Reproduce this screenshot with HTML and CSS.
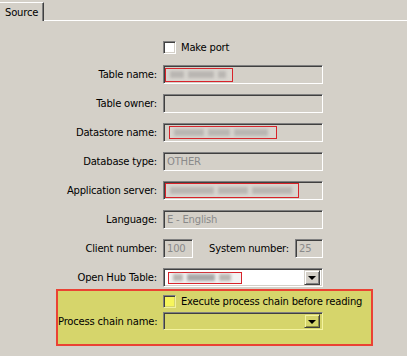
FILE: index.html
```html
<!DOCTYPE html>
<html lang="en">
<head>
  <meta charset="UTF-8">
  <title>Source</title>
  <link rel="stylesheet" href="styles.css">
</head>
<body>

  <div class="tabs">
    <div class="tab">Source</div>
    <div class="tab-line"></div>
  </div>

  <div class="form">
    <span></span>
    <label class="check"><span class="box"></span>Make port</label>

    <span class="lbl">Table name:</span>
    <div class="field"><span class="mask m1"><i></i><i></i><i></i></span></div>

    <span class="lbl">Table owner:</span>
    <div class="field"></div>

    <span class="lbl">Datastore name:</span>
    <div class="field"><span class="mask m2"><i></i><i></i><i></i></span></div>

    <span class="lbl">Database type:</span>
    <div class="field">OTHER</div>

    <span class="lbl">Application server:</span>
    <div class="field"><span class="mask m3"><i></i><i></i><i></i></span></div>

    <span class="lbl">Language:</span>
    <div class="field">E - English</div>

    <span class="lbl">Client number:</span>
    <div class="pair">
      <div class="field small">100</div>
      <span class="lbl">System number:</span>
      <div class="field small">25</div>
    </div>

    <span class="lbl">Open Hub Table:</span>
    <div class="field combo white"><span class="mask m4"><i></i><i></i><i></i></span><span class="drop"></span></div>
  </div>

  <div class="highlight">
    <span></span>
    <label class="check"><span class="box yellow"></span>Execute process chain before reading</label>

    <span class="lbl">Process chain name:</span>
    <div class="field combo ylw"><span class="drop"></span></div>
  </div>

</body>
</html>
```

FILE: styles.css
```css
:root {
  --face: #d4d0c8;
  --shadow: #808080;
  --dark: #404040;
  --hl: #d6d56b;
}

body {
  margin: 0;
  background: var(--face);
  font-family: 'DejaVu Sans', Verdana, sans-serif;
  font-size: 10px;
  letter-spacing: -0.2px;
  color: #000;
}

.tabs {
  display: flex;
  height: 21px;
  padding-top: 2px;
  box-sizing: border-box;
}

.tab {
  width: 44px;
  border-top: 1px solid #fff;
  border-right: 1px solid var(--dark);
  box-shadow: inset -1px 0 0 var(--shadow);
  padding: 4px 0 0 5px;
  box-sizing: border-box;
}

.tab-line {
  flex: 1;
  border-bottom: 1px solid #fff;
}

.form {
  display: grid;
  grid-template-columns: 157px 160px;
  column-gap: 6px;
  row-gap: 10px;
  padding-top: 20px;
  align-items: center;
}

.form > span:first-child {
  height: 13px;
}

.form .check {
  margin-bottom: 1px;
}

.lbl {
  text-align: right;
  white-space: nowrap;
}

.check {
  display: flex;
  align-items: center;
  gap: 5px;
  height: 13px;
  white-space: nowrap;
}

.box {
  flex: none;
  width: 11px;
  height: 11px;
  background: #fff;
  border-top: 1px solid var(--shadow);
  border-left: 1px solid var(--shadow);
  border-bottom: 1px solid #fff;
  border-right: 1px solid #fff;
  box-shadow: inset 1px 1px 0 var(--dark), inset -1px -1px 0 var(--face);
}

.box.yellow {
  background: #f6f55c;
  border-bottom-color: #f0f0a0;
  border-right-color: #f0f0a0;
  box-shadow: inset 1px 1px 0 var(--dark), inset -1px -1px 0 var(--hl);
}

.field {
  height: 19px;
  box-sizing: border-box;
  border-top: 1px solid var(--shadow);
  border-left: 1px solid var(--shadow);
  border-bottom: 1px solid #fff;
  border-right: 1px solid #fff;
  box-shadow: inset 1px 1px 0 var(--dark), inset -1px -1px 0 var(--face);
  padding: 0 3px;
  display: flex;
  align-items: center;
  color: #8a8a8a;
}

.field.white {
  background: #fff;
}

.field.combo {
  padding-right: 2px;
}

.pair {
  display: flex;
  align-items: center;
  gap: 6px;
}

.pair .lbl {
  margin-left: auto;
}

.field.small {
  width: 30px;
}

.pair .field.small:last-child {
  width: 28px;
}

.mask {
  height: 14px;
  box-sizing: border-box;
  border: 1px solid #d8232a;
  margin-left: -2px;
  display: flex;
  align-items: center;
  gap: 4px;
  padding: 0 4px;
  background: #d9d6d0;
}

.mask i {
  height: 7px;
  background: #b9b6b2;
  filter: blur(1.5px);
}

.m1 { width: 68px; }
.m1 i:nth-child(1) { width: 14px; }
.m1 i:nth-child(2) { width: 26px; }
.m1 i:nth-child(3) { width: 8px; }

.m2 { width: 108px; margin-left: 2px; height: 13px; }
.m2 i:nth-child(1) { width: 30px; }
.m2 i:nth-child(2) { width: 22px; }
.m2 i:nth-child(3) { width: 34px; }

.m3 { width: 134px; margin-left: -2px; height: 15px; }
.m3 i:nth-child(1) { width: 44px; }
.m3 i:nth-child(2) { width: 30px; }
.m3 i:nth-child(3) { width: 40px; }

.m4 { width: 74px; margin-left: 1px; height: 12px; background: #f2f2f2; }
.m4 i:nth-child(1) { width: 10px; }
.m4 i:nth-child(2) { width: 28px; background: #a8a8a8; }
.m4 i:nth-child(3) { width: 12px; }

.drop {
  margin-left: auto;
  width: 16px;
  height: 15px;
  box-sizing: border-box;
  background: var(--face);
  border-top: 1px solid var(--face);
  border-left: 1px solid var(--face);
  border-right: 1px solid var(--dark);
  border-bottom: 1px solid var(--dark);
  box-shadow: inset 1px 1px 0 #fff, inset -1px -1px 0 var(--shadow);
  display: flex;
  align-items: center;
  justify-content: center;
}

.drop::after {
  content: '';
  border-left: 4px solid transparent;
  border-right: 4px solid transparent;
  border-top: 4px solid #000;
  margin-top: 1px;
}

.highlight {
  margin: 2px 0 0 56px;
  width: 317px;
  height: 57px;
  box-sizing: border-box;
  border: 2px solid #ea4234;
  background: var(--hl);
  display: grid;
  grid-template-columns: 99px 160px;
  column-gap: 6px;
  row-gap: 4px;
  padding-top: 4px;
  align-content: start;
  align-items: center;
}

.highlight .field.ylw {
  background: var(--hl);
  border-bottom-color: #f4f3a0;
  border-right-color: #f4f3a0;
  box-shadow: inset 1px 1px 0 var(--dark), inset -1px -1px 0 var(--hl);
  height: 18px;
}

.highlight .drop {
  background: var(--hl);
  border-top-color: var(--hl);
  border-left-color: var(--hl);
  box-shadow: inset 1px 1px 0 #f4f3a0, inset -1px -1px 0 #8a8a40;
  height: 14px;
}
```
